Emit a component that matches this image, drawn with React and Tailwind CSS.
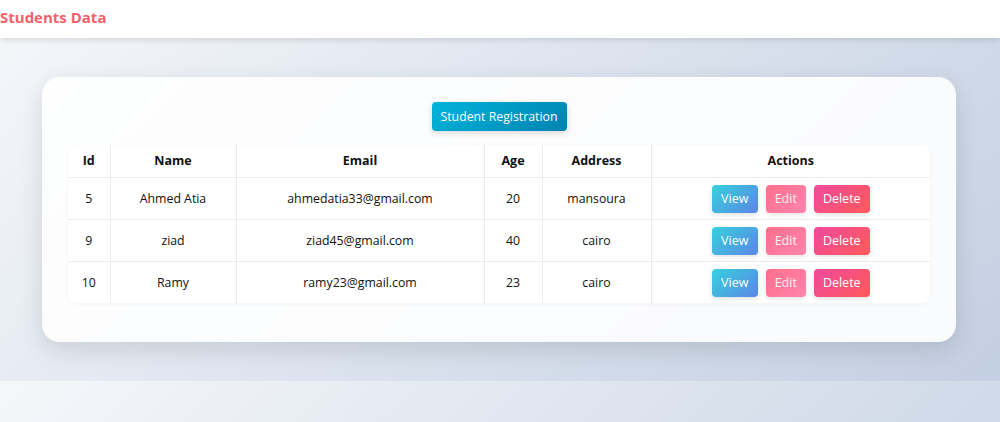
import React from "react";

const rows = [
  { id: 5, name: "Ahmed Atia", email: "ahmedatia33@gmail.com", age: 20, address: "mansoura" },
  { id: 9, name: "ziad", email: "ziad45@gmail.com", age: 40, address: "cairo" },
  { id: 10, name: "Ramy", email: "ramy23@gmail.com", age: 23, address: "cairo" },
];

export default function App() {
  return (
    <div
      className="min-h-[422px] w-[1000px] bg-[linear-gradient(135deg,#f5f7fa,#c3cfe2)] bg-[length:100%_381px] bg-repeat-y text-[#111]"
      style={{ fontFamily: '"Open Sans", "Noto Sans", sans-serif' }}
    >
      <div className="h-[381px] flex flex-col">
        <header className="h-[38px] bg-white shadow-[0_2px_6px_rgba(0,0,0,0.12)] flex items-center relative z-10">
          <h1 className="text-[15px] font-bold text-[#f2616a] leading-none -mt-[4px]">Students Data</h1>
        </header>
        <main className="pt-[39px] pl-[42px]">
          <div className="w-[914px] h-[265px] rounded-[18px] bg-white/90 shadow-[0_8px_24px_rgba(0,0,0,0.12)] px-[26px] pt-[25px] flex flex-col items-center">
            <button className="h-[29px] w-[135px] rounded-[4px] bg-[linear-gradient(135deg,#00b4db,#0083b0)] text-white text-[12.3px] pt-[1px] shadow-[0_2px_6px_rgba(0,0,0,0.15)]">
              Student Registration
            </button>
            <div className="mt-[14px] w-[862px] rounded-[8px] overflow-hidden bg-white shadow-[0_1px_4px_rgba(0,0,0,0.04)]">
              <table className="w-full border-collapse table-fixed text-[12.3px]">
                <colgroup>
                  <col className="w-[42px]" />
                  <col className="w-[126px]" />
                  <col className="w-[248px]" />
                  <col className="w-[58px]" />
                  <col className="w-[109px]" />
                  <col />
                </colgroup>
                <thead>
                  <tr className="h-[32px]">
                    {["Id", "Name", "Email", "Age", "Address", "Actions"].map((h, i) => (
                      <th
                        key={h}
                        className={`font-bold text-center text-[12.5px] pt-[1px] border-b border-[#ececec] ${i < 5 ? "border-r" : ""}`}
                      >
                        {h}
                      </th>
                    ))}
                  </tr>
                </thead>
                <tbody>
                  {rows.map((r, idx) => (
                    <tr key={r.id} className={`h-[42px] ${idx < 2 ? "border-b border-[#ececec]" : ""}`}>
                      <td className="text-center pt-[2px] border-r border-[#ececec]">{r.id}</td>
                      <td className="text-center pt-[2px] border-r border-[#ececec]">{r.name}</td>
                      <td className="text-center pt-[2px] border-r border-[#ececec]">{r.email}</td>
                      <td className="text-center pt-[2px] border-r border-[#ececec]">{r.age}</td>
                      <td className="text-center pt-[2px] border-r border-[#ececec]">{r.address}</td>
                      <td className="text-center pt-[1px]">
                        <div className="flex justify-center items-center gap-[8px]">
                          <button className="h-[28px] w-[46px] rounded-[4px] bg-[linear-gradient(135deg,#36d1dc,#5b86e5)] text-white text-[12.5px] pt-[1px] shadow-[0_2px_5px_rgba(0,0,0,0.12)]">
                            View
                          </button>
                          <button className="h-[28px] w-[40px] rounded-[4px] bg-[linear-gradient(135deg,#ff6e8c,#ff85ad)] text-white/90 text-[12.5px] pt-[1px] shadow-[0_2px_5px_rgba(0,0,0,0.1)]">
                            Edit
                          </button>
                          <button className="h-[28px] w-[56px] rounded-[4px] bg-[linear-gradient(135deg,#ef4a9c,#ff5a5a)] text-white text-[12.5px] pt-[1px] shadow-[0_2px_5px_rgba(0,0,0,0.12)]">
                            Delete
                          </button>
                        </div>
                      </td>
                    </tr>
                  ))}
                </tbody>
              </table>
            </div>
          </div>
        </main>
      </div>
    </div>
  );
}
